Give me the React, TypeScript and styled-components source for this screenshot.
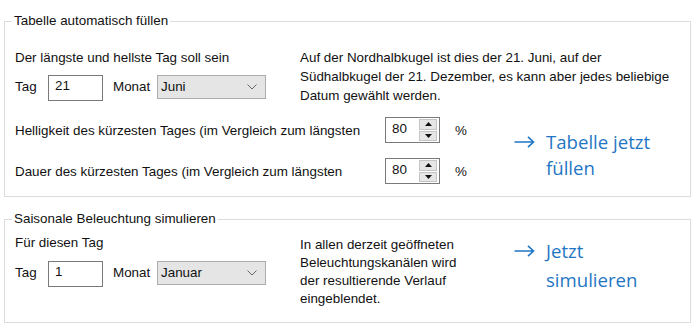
import styled, { createGlobalStyle } from "styled-components"

const GlobalStyle = createGlobalStyle`
    html, body {
        margin: 0;
        padding: 0;
        background: #fff;
    }
    body {
        font-family: "Liberation Sans", Arial, sans-serif;
        font-size: 13.4px;
        color: #111;
    }
`

const Page = styled.div`
    width: 700px;
    box-sizing: border-box;
    padding: 13px 9px 0 4px;
    display: flex;
    flex-direction: column;
    gap: 14px;
`

const Group = styled.fieldset<{ $pb: number }>`
    margin: 0;
    min-width: 0;
    border: 1px solid #dcdcdc;
    padding: 0 10px ${p => p.$pb}px 10px;
`

const Caption = styled.legend`
    padding: 0 2px;
    margin-left: -3px;
    line-height: 16px;
`

const TopRow = styled.div<{ $mt: number }>`
    display: flex;
    margin-top: ${p => p.$mt}px;
`

const LeftCol = styled.div`
    width: 285px;
    flex: none;
    display: flex;
    flex-direction: column;
`

const Title = styled.div<{ $mt: number }>`
    line-height: 16px;
    margin-top: ${p => p.$mt}px;
`

const ControlRow = styled.div<{ $mt: number }>`
    display: flex;
    align-items: flex-start;
    margin-top: ${p => p.$mt}px;
    height: 26px;
`

const Label = styled.span<{ $w: number }>`
    width: ${p => p.$w}px;
    flex: none;
    line-height: 16px;
    margin-top: 4px;
`

const TextBox = styled.div`
    width: 55px;
    height: 26px;
    box-sizing: border-box;
    border: 1px solid #7a7a7a;
    padding: 2px 0 0 6px;
    line-height: 16px;
    margin-right: 10px;
    background: #fff;
`

const Select = styled.div`
    width: 109px;
    height: 24px;
    box-sizing: border-box;
    border: 1px solid #adadad;
    background: #e5e5e5;
    display: flex;
    align-items: center;
    justify-content: space-between;
    padding: 0 8px 0 3px;
    line-height: 16px;
`

const Desc = styled.div<{ $lh: number; $mt: number; $w?: number }>`
    line-height: ${p => p.$lh}px;
    margin-top: ${p => p.$mt}px;
    flex: none;
    width: ${p => (p.$w ? `${p.$w}px` : "auto")};
`

const BottomRow = styled.div`
    display: flex;
    align-items: flex-start;
    margin-top: 12px;
`

const Settings = styled.div`
    display: grid;
    grid-template-columns: 370px 55px 74px;
    row-gap: 15px;
    align-items: center;
`

const Percent = styled.span`
    padding-left: 15px;
`

const Spin = styled.div`
    width: 55px;
    height: 26px;
    box-sizing: border-box;
    border: 1px solid #7a7a7a;
    display: flex;
    background: #fff;
`

const SpinValue = styled.span`
    flex: 1;
    padding: 3px 0 0 6px;
    line-height: 16px;
`

const SpinButtons = styled.div`
    width: 18px;
    margin: 1px 2px 1px 0;
    display: flex;
    flex-direction: column;
    gap: 1px;
`

const SpinBtn = styled.div`
    flex: 1;
    background: #e6e6e6;
    border: 1px solid #c4c4c4;
    display: flex;
    align-items: center;
    justify-content: center;
`

const Link = styled.div<{ $lh: number; $mt: number }>`
    display: flex;
    color: #1f76c4;
    font-family: "Open Sans", "Noto Sans", sans-serif;
    font-size: 18.6px;
    line-height: ${p => p.$lh}px;
    margin-top: ${p => p.$mt}px;
    cursor: pointer;
`

const Arrow = styled.span<{ $lh: number }>`
    width: 32px;
    height: ${p => p.$lh}px;
    flex: none;
    display: flex;
    align-items: center;
`

function ArrowIcon() {
    return (
        <svg width="21" height="12" viewBox="0 0 21 12">
            <path d="M0.5 6 H19.5 M14 0.8 L19.5 6 L14 11.2" fill="none" stroke="#1f76c4" strokeWidth="1.6" />
        </svg>
    )
}

function Chevron() {
    return (
        <svg width="10" height="6" viewBox="0 0 10 6">
            <path d="M0.5 0.5 L5 5 L9.5 0.5" fill="none" stroke="#666" strokeWidth="1" />
        </svg>
    )
}

function Spinner({ value }: { value: string }) {
    return (
        <Spin>
            <SpinValue>{value}</SpinValue>
            <SpinButtons>
                <SpinBtn>
                    <svg width="7" height="4" viewBox="0 0 7 4"><path d="M3.5 0 L7 4 L0 4 Z" fill="#111" /></svg>
                </SpinBtn>
                <SpinBtn>
                    <svg width="7" height="4" viewBox="0 0 7 4"><path d="M0 0 L7 0 L3.5 4 Z" fill="#111" /></svg>
                </SpinBtn>
            </SpinButtons>
        </Spin>
    )
}

function DateRow({ day, month, mt }: { day: string; month: string; mt: number }) {
    return (
        <ControlRow $mt={mt}>
            <Label $w={33}>Tag</Label>
            <TextBox>{day}</TextBox>
            <Label $w={44}>Monat</Label>
            <Select>
                <span>{month}</span>
                <Chevron />
            </Select>
        </ControlRow>
    )
}

function ActionLink({ lines, lh, mt }: { lines: string[]; lh: number; mt: number }) {
    return (
        <Link $lh={lh} $mt={mt}>
            <Arrow $lh={lh}><ArrowIcon /></Arrow>
            <span>
                {lines[0]}<br />{lines[1]}
            </span>
        </Link>
    )
}

export default function App() {
    return (
        <>
            <GlobalStyle />
            <Page>
                <Group $pb={12}>
                    <Caption>Tabelle automatisch füllen</Caption>
                    <TopRow $mt={19}>
                        <LeftCol>
                            <Title $mt={2}>Der längste und hellste Tag soll sein</Title>
                            <DateRow day="21" month="Juni" mt={9} />
                        </LeftCol>
                        <Desc $lh={19} $mt={0}>
                            Auf der Nordhalbkugel ist dies der 21. Juni, auf der<br />
                            Südhalbkugel der 21. Dezember, es kann aber jedes beliebige<br />
                            Datum gewählt werden.
                        </Desc>
                    </TopRow>
                    <BottomRow>
                        <Settings>
                            <span>Helligkeit des kürzesten Tages (im Vergleich zum längsten</span>
                            <Spinner value="80" />
                            <Percent>%</Percent>
                            <span>Dauer des kürzesten Tages (im Vergleich zum längsten</span>
                            <Spinner value="80" />
                            <Percent>%</Percent>
                        </Settings>
                        <ActionLink lines={["Tabelle jetzt", "füllen"]} lh={26} mt={12} />
                    </BottomRow>
                </Group>
                <Group $pb={14}>
                    <Caption>Saisonale Beleuchtung simulieren</Caption>
                    <TopRow $mt={8}>
                        <LeftCol>
                            <Title $mt={0}>Für diesen Tag</Title>
                            <DateRow day="1" month="Januar" mt={10} />
                        </LeftCol>
                        <Desc $lh={18} $mt={1} $w={214}>
                            In allen derzeit geöffneten<br />
                            Beleuchtungskanälen wird<br />
                            der resultierende Verlauf<br />
                            eingeblendet.
                        </Desc>
                        <ActionLink lines={["Jetzt", "simulieren"]} lh={29} mt={1} />
                    </TopRow>
                </Group>
            </Page>
        </>
    )
}
